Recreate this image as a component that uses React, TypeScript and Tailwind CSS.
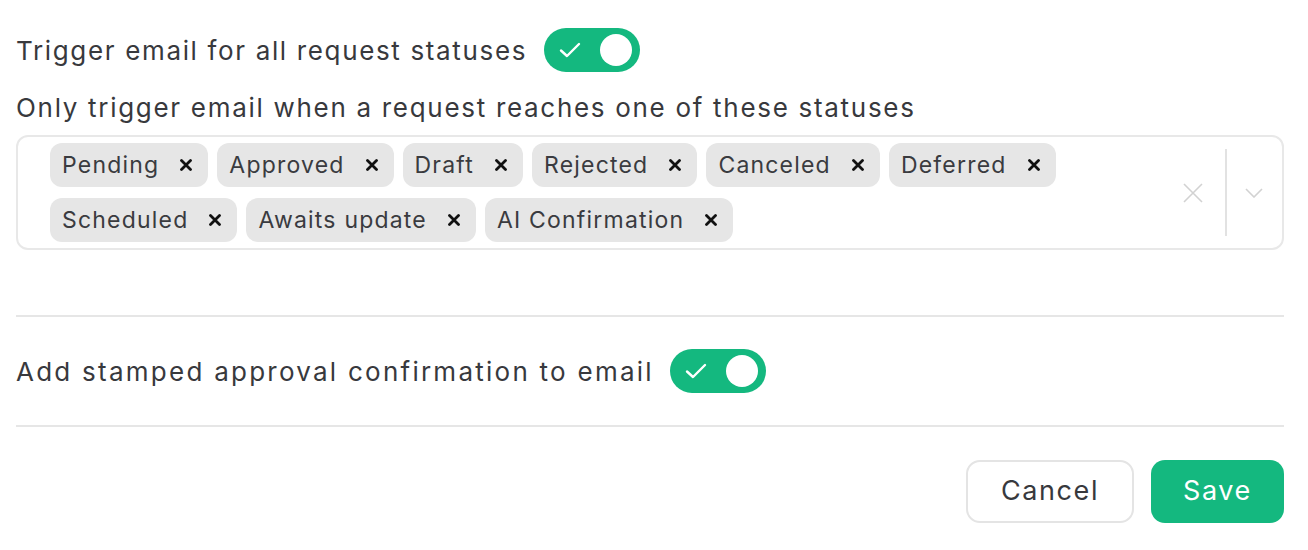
const statuses = [
  'Pending',
  'Approved',
  'Draft',
  'Rejected',
  'Canceled',
  'Deferred',
  'Scheduled',
  'Awaits update',
  'AI Confirmation',
];

function Toggle() {
  return (
    <div className="flex h-[44px] w-[96px] items-center justify-between rounded-full bg-[#14b87f] pl-[15px] pr-[8px]">
      <svg width="22" height="16" viewBox="0 0 22 16" fill="none">
        <path d="M2 8.5 L8 14 L20 2" stroke="white" strokeWidth="2.4" strokeLinecap="round" strokeLinejoin="round" />
      </svg>
      <div className="h-[32px] w-[32px] rounded-full bg-white" />
    </div>
  );
}

function Chip({ label }: { label: string }) {
  return (
    <div className="flex h-[44px] items-center gap-[21px] rounded-[12px] bg-[#e6e6e6] pl-[12px] pr-[16px]">
      <span className="text-[23px] tracking-[1.2px] text-[#3a3b3f]">{label}</span>
      <svg width="12" height="12" viewBox="0 0 12 12">
        <path d="M1.5 1.5 L10.5 10.5 M10.5 1.5 L1.5 10.5" stroke="#111" strokeWidth="2.8" strokeLinecap="round" />
      </svg>
    </div>
  );
}

export default function App() {
  return (
    <div
      className="w-[1308px] bg-white pl-[16px] pr-[24px] pt-[28px] text-[#38393d]"
      style={{ fontFamily: 'Inter, "Noto Sans", sans-serif' }}
    >
      <div className="flex items-center gap-[17px]">
        <span className="text-[26px] tracking-[1.65px]">Trigger email for all request statuses</span>
        <Toggle />
      </div>

      <div className="mt-[18px] text-[26px] leading-[36px] tracking-[1.7px]">
        Only trigger email when a request reaches one of these statuses
      </div>

      {/* status multi select */}
      <div className="mt-[9px] flex items-center rounded-[12px] border-2 border-[#e8e8e8] py-[6px] pl-[32px]">
        <div className="flex flex-1 flex-wrap gap-x-[9px] gap-y-[11px]">
          {statuses.map(s => (
            <Chip key={s} label={s} />
          ))}
        </div>
        <div className="flex items-center self-stretch py-[6px]">
          <svg width="20" height="20" viewBox="0 0 20 20" className="mr-[22px]">
            <path d="M1 1 L19 19 M19 1 L1 19" stroke="#d2d2d2" strokeWidth="1.6" />
          </svg>
          <div className="w-[2px] self-stretch bg-[#e2e2e2]" />
          <svg width="18" height="10" viewBox="0 0 18 10" className="ml-[18px] mr-[19px]">
            <path d="M1 1 L9 9 L17 1" stroke="#d2d2d2" strokeWidth="1.6" fill="none" />
          </svg>
        </div>
      </div>

      <div className="mt-[65px] h-[2px] bg-[#e6e6e6]" />

      <div className="flex items-center gap-[16px] py-[32px]">
        <span className="text-[26px] tracking-[2.25px]">Add stamped approval confirmation to email</span>
        <Toggle />
      </div>

      <div className="h-[2px] bg-[#e6e6e6]" />

      <div className="flex justify-end gap-[17px] pt-[33px] pb-[27px]">
        <button className="h-[63px] w-[168px] rounded-[14px] border-2 border-[#e4e4e4] bg-white text-[27px] tracking-[1.6px] text-[#38393d]">
          Cancel
        </button>
        <button className="h-[63px] w-[133px] rounded-[14px] bg-[#14b87f] text-[27px] tracking-[1.6px] text-white">
          Save
        </button>
      </div>
    </div>
  );
}
